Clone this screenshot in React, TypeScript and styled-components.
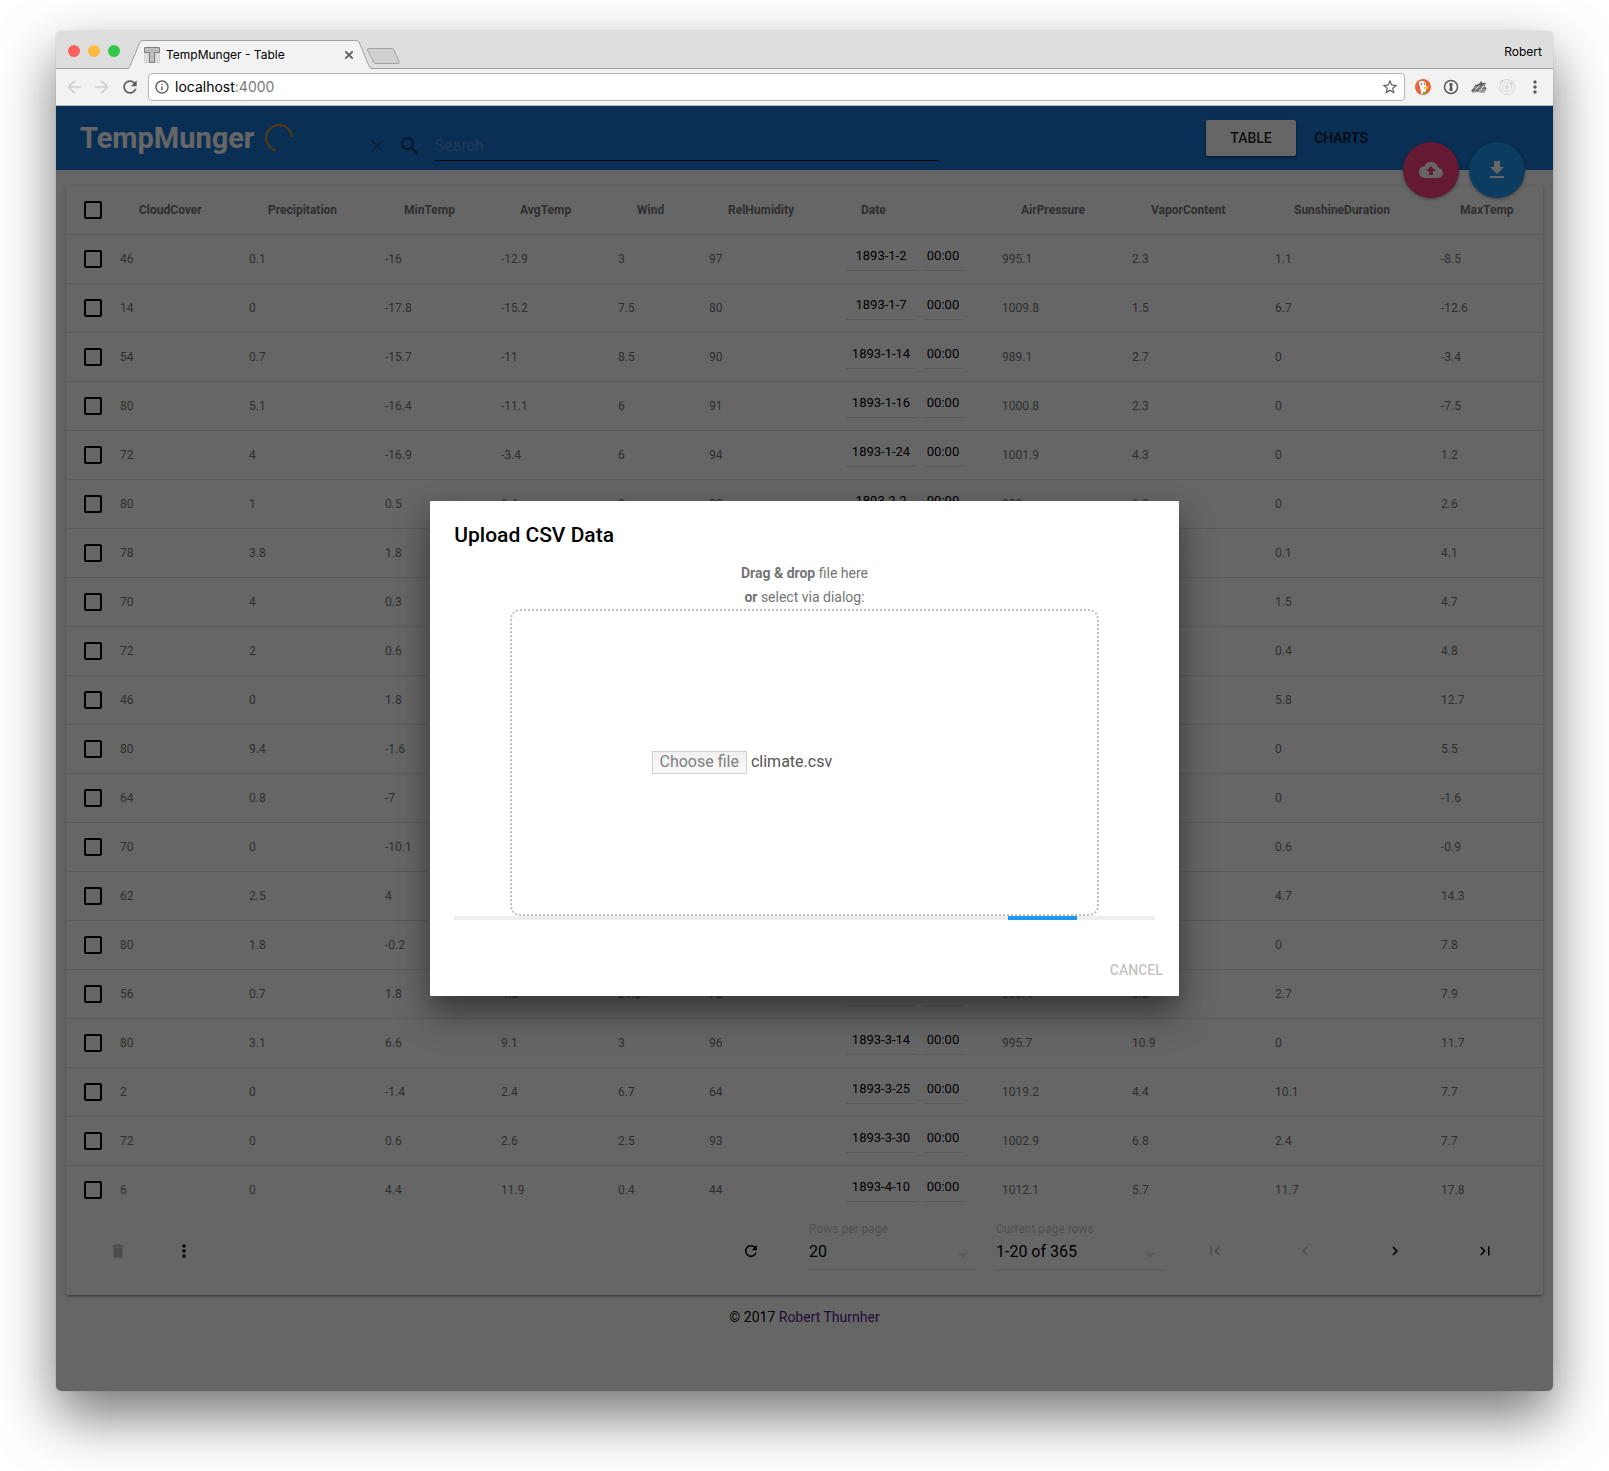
import React from "react";
import styled, { createGlobalStyle } from "styled-components";

const GlobalStyle = createGlobalStyle`
  *, *::before, *::after { box-sizing: border-box; }
  body {
    margin: 0;
    background: #fff;
    color: #000;
    font-family: Roboto, "Liberation Sans", sans-serif;
    font-size: 14px;
  }
  button, input, select { font-family: inherit; }
  button { padding: 0; border: 0; background: none; color: inherit; cursor: pointer; }
`;

/* ---------- browser window ---------- */

const Desktop = styled.div`
  display: flex;
  min-height: 100vh;
  padding: 31px 56px 80px;
`;

const BrowserWindow = styled.div`
  flex: 1;
  display: flex;
  flex-direction: column;
  min-width: 0;
  overflow: hidden;
  border-radius: 5px;
  box-shadow: 0 0 1px rgba(0, 0, 0, 0.4), 0 25px 56px rgba(0, 0, 0, 0.54);
`;

const TitleBar = styled.div`
  display: flex;
  height: 38px;
  padding: 0 11px 0 12px;
  border-bottom: 1px solid #a0a0a0;
  background: #dedede;
`;

const TrafficLights = styled.div`
  display: flex;
  gap: 8px;
  padding-top: 14px;
  width: 60px;
`;

const Light = styled.button<{ $color: string }>`
  width: 12px;
  height: 12px;
  border-radius: 50%;
  background: ${(p) => p.$color};
`;

const TabFrame = styled.div`
  display: grid;
  width: 244px;
  height: 38px;
  padding-top: 9px;

  > * { grid-area: 1 / 1; }
`;

const TabContent = styled.div`
  display: flex;
  align-items: center;
  padding: 0 16px;
  height: 29px;
`;

const TabTitle = styled.span`
  flex: 1;
  padding-left: 6px;
  font-family: Inter, Roboto, sans-serif;
  font-size: 12px;
  line-height: 16px;
`;

const IconButton = styled.button<{ $color?: string }>`
  display: flex;
  align-items: center;
  justify-content: center;
  color: ${(p) => p.$color ?? "inherit"};

  > svg { flex: none; }
`;

const NewTab = styled(IconButton)`
  align-self: flex-start;
  height: 18px;
  margin-top: 16px;
  margin-left: -6px;
`;

const Profile = styled.span`
  margin-left: auto;
  padding-top: 13px;
  font-family: Inter, Roboto, sans-serif;
  font-size: 12px;
  line-height: 16px;
`;

const AddressRow = styled.div`
  display: flex;
  align-items: center;
  gap: 8px;
  height: 37px;
  padding: 0 10px 0 8px;
  border-bottom: 1px solid #b6b6b6;
  background: #f2f2f2;
`;

const AddressBar = styled.div`
  flex: 1;
  display: flex;
  align-items: center;
  gap: 5px;
  height: 28px;
  padding: 0 5px;
  border: 1px solid #b4b4b4;
  border-radius: 4px;
  background: #fff;
  color: #5c5c5c;
  font-family: Inter, Roboto, sans-serif;
  font-size: 14px;
`;

const Url = styled.span`
  flex: 1;
  color: #000;
  line-height: 18px;
`;

const Port = styled.span`
  color: #7a7a7a;
`;

const Extensions = styled.div`
  display: flex;
  align-items: center;
  gap: 12px;
  padding-left: 2px;
`;

const ExtensionButton = styled(IconButton)`
  width: 16px;
`;

/* ---------- page ---------- */

const Page = styled.div`
  position: relative;
  flex: 1;
  display: flex;
  flex-direction: column;
  background: #fff;
`;

const AppBar = styled.header`
  display: flex;
  height: 64px;
  padding: 0 28px 0 24px;
  background: #1976d2;
`;

const Brand = styled.h1`
  display: flex;
  align-items: center;
  gap: 9px;
  margin: 0;
  color: #fff;
  font-size: 29px;
  font-weight: 700;
  line-height: 64px;
`;

const SearchBox = styled.div`
  display: flex;
  flex: 0 1 572px;
  align-items: center;
  gap: 11px;
  height: 55px;
  margin-left: 73px;
  padding-top: 24px;
`;

const SearchLabel = styled.label`
  display: flex;
  color: rgba(0, 0, 0, 0.54);
`;

const SearchInput = styled.input`
  flex: 1;
  min-width: 0;
  height: 31px;
  margin-left: 2px;
  padding: 0;
  border: 0;
  border-bottom: 1px solid rgba(0, 0, 0, 0.87);
  background: none;
  font-size: 16px;
  outline: 0;

  &::placeholder { color: rgba(255, 255, 255, 0.24); }
`;

const Nav = styled.nav`
  display: flex;
  align-items: center;
  margin-left: auto;
  margin-right: 17px;
  height: 64px;
`;

const NavButton = styled.button<{ $active?: boolean }>`
  width: 90px;
  height: 36px;
  border-radius: 2px;
  color: rgba(0, 0, 0, 0.87);
  font-size: 14px;
  font-weight: 500;
  text-transform: uppercase;
  ${(p) =>
    p.$active &&
    "background: #fff; box-shadow: 0 1px 3px rgba(0, 0, 0, 0.4), 0 1px 2px rgba(0, 0, 0, 0.24);"}
`;

const FloatingActions = styled.div`
  display: flex;
  gap: 10px;
  height: 56px;
  margin-top: 36px;
  z-index: 1;
`;

const Fab = styled(IconButton)<{ $bg: string }>`
  width: 56px;
  height: 56px;
  border-radius: 50%;
  background: ${(p) => p.$bg};
  color: #fff;
  box-shadow: 0 1px 4px rgba(0, 0, 0, 0.26), 0 1px 2px rgba(0, 0, 0, 0.2);
`;

const Card = styled.main`
  margin: 16px 10px 0;
  border-radius: 2px;
  background: #fff;
  box-shadow: 0 1px 5px rgba(0, 0, 0, 0.2), 0 2px 2px rgba(0, 0, 0, 0.14), 0 3px 1px -2px rgba(0, 0, 0, 0.12);
`;

const Table = styled.table`
  width: 100%;
  table-layout: fixed;
  border-spacing: 0;
  color: #757575;
  font-size: 12px;
  text-align: left;
`;

const Col = styled.col<{ $w: number }>`
  width: ${(p) => p.$w}px;
`;

const HeadCell = styled.th`
  height: 49px;
  padding: 0 0 0 19px;
  border-bottom: 1px solid rgba(0, 0, 0, 0.12);
  font-weight: 700;
`;

const Cell = styled.td`
  height: 49px;
  padding: 0;
  border-bottom: 1px solid rgba(0, 0, 0, 0.12);

  tbody > tr:last-child > & { border-bottom-color: transparent; }
`;

const CheckCell = styled(Cell)`
  padding-left: 18px;
`;

const Checkbox = styled.input`
  display: block;
  appearance: none;
  width: 18px;
  height: 18px;
  margin: 0;
  border: 2px solid #000;
  border-radius: 2px;
`;

const DateFields = styled.div`
  display: flex;
  gap: 7px;
  padding: 0 0 6px 4px;
`;

const DateInput = styled.input<{ $w: number }>`
  width: ${(p) => p.$w}px;
  height: 30px;
  padding: 0 0 1px;
  border: 0;
  border-bottom: 1px solid rgba(0, 0, 0, 0.12);
  background: none;
  color: #000;
  font-size: 13px;
  text-align: center;
`;

const TableFooter = styled.div`
  display: flex;
  align-items: center;
  height: 80px;
  padding: 0 13px 8px 19px;
`;

const ToolButton = styled(IconButton)<{ $w: number }>`
  width: ${(p) => p.$w}px;
  height: 36px;

  &:disabled { color: rgba(0, 0, 0, 0.26); cursor: default; }
`;

const Spacer = styled.div`
  flex: 1;
`;

const PagingFields = styled.div`
  display: flex;
  gap: 20px;
  padding: 0 7px 12px 25px;
`;

const Field = styled.div`
  display: grid;
  grid-template-columns: 1fr 25px;
  align-items: center;
  width: 167px;
`;

const FieldLabel = styled.label`
  grid-column: 1 / -1;
  color: rgba(0, 0, 0, 0.26);
  font-size: 12px;
  line-height: 16px;
`;

const FieldSelect = styled.select`
  grid-area: 2 / 1 / 3 / 3;
  height: 33px;
  padding: 0 0 3px;
  border: 0;
  border-bottom: 1px solid rgba(0, 0, 0, 0.12);
  border-radius: 0;
  appearance: none;
  background: none;
  color: #000;
  font-size: 16px;
`;

const FieldArrow = styled.span`
  grid-area: 2 / 2;
  display: flex;
  padding-top: 4px;
  color: rgba(0, 0, 0, 0.12);
  pointer-events: none;
`;

const Copyright = styled.footer`
  padding: 10px 0 62px;
  font-size: 14px;
  line-height: 24px;
  text-align: center;

  a { color: #551a8b; text-decoration: none; }
`;

/* ---------- upload dialog ---------- */

const Backdrop = styled.div`
  position: absolute;
  inset: 0;
  z-index: 2;
  display: flex;
  align-items: center;
  justify-content: center;
  background: rgba(0, 0, 0, 0.6);
`;

const Dialog = styled.section`
  width: 50%;
  border-radius: 1px;
  background: #fff;
  box-shadow: 0 19px 38px rgba(0, 0, 0, 0.3), 0 12px 24px rgba(0, 0, 0, 0.22);
`;

const DialogTitle = styled.h2`
  margin: 0;
  padding: 24px 24px 16px;
  font-size: 21px;
  font-weight: 500;
  line-height: 20px;
`;

const DialogBody = styled.div`
  padding: 0 24px 24px;
`;

const Hint = styled.p`
  margin: 0;
  color: #757575;
  font-size: 14px;
  line-height: 24px;
  text-align: center;
`;

const DropZone = styled.div`
  display: flex;
  align-items: center;
  justify-content: center;
  height: 307px;
  margin: 0 8%;
  border: 2px dotted #bdbdbd;
  border-radius: 10px;
`;

const FilePicker = styled.label`
  display: flex;
  align-items: center;
  gap: 4px;
  width: 306px;
  color: #555;
  font-size: 16px;
  line-height: 20px;
`;

const FileInput = styled.input`
  position: absolute;
  width: 1px;
  height: 1px;
  opacity: 0;
`;

const FileButton = styled.span`
  height: 23px;
  padding: 0 7px;
  border: 1px solid #d0d0d0;
  background: linear-gradient(#f0f0f0, #fafafa);
  color: #808080;
`;

const FileName = styled.span`
  padding-bottom: 2px;
`;

const Progress = styled.div`
  height: 4px;
  background: #eee;
`;

const ProgressBar = styled.div`
  width: 69px;
  height: 4px;
  margin-left: 79%;
  background: #2196f3;
`;

const DialogActions = styled.div`
  display: flex;
  justify-content: flex-end;
  padding: 8px;
`;

const FlatButton = styled.button`
  height: 36px;
  padding: 0 8px;
  color: rgba(0, 0, 0, 0.26);
  font-size: 14px;
  font-weight: 500;
  text-transform: uppercase;
`;

/* ---------- icons ---------- */

const PATHS = {
  back: "M20 11H7.83l5.59-5.59L12 4l-8 8 8 8 1.41-1.41L7.83 13H20v-2z",
  forward: "M12 4l-1.41 1.41L16.17 11H4v2h12.17l-5.58 5.59L12 20l8-8z",
  refresh:
    "M17.65 6.35C16.2 4.9 14.21 4 12 4c-4.42 0-7.99 3.58-7.99 8s3.57 8 7.99 8c3.73 0 6.84-2.55 7.73-6h-2.08c-.82 2.33-3.04 4-5.65 4-3.31 0-6-2.69-6-6s2.69-6 6-6c1.66 0 3.14.69 4.22 1.78L13 11h7V4l-2.35 2.35z",
  info: "M11 17h2v-6h-2v6zm1-15C6.48 2 2 6.48 2 12s4.48 10 10 10 10-4.48 10-10S17.52 2 12 2zm0 18c-4.41 0-8-3.59-8-8s3.59-8 8-8 8 3.59 8 8-3.59 8-8 8zM11 9h2V7h-2v2z",
  star: "M22 9.24l-7.19-.62L12 2 9.19 8.63 2 9.24l5.46 4.73L5.82 21 12 17.27 18.18 21l-1.63-7.03L22 9.24zM12 15.4l-3.76 2.27 1-4.28-3.32-2.88 4.38-.38L12 6.1l1.71 4.04 4.38.38-3.32 2.88 1 4.28L12 15.4z",
  more: "M12 8c1.1 0 2-.9 2-2s-.9-2-2-2-2 .9-2 2 .9 2 2 2zm0 2c-1.1 0-2 .9-2 2s.9 2 2 2 2-.9 2-2-.9-2-2-2zm0 6c-1.1 0-2 .9-2 2s.9 2 2 2 2-.9 2-2-.9-2-2-2z",
  close:
    "M19 6.41L17.59 5 12 10.59 6.41 5 5 6.41 10.59 12 5 17.59 6.41 19 12 13.41 17.59 19 19 17.59 13.41 12z",
  search:
    "M15.5 14h-.79l-.28-.27C15.41 12.59 16 11.11 16 9.5 16 5.91 13.09 3 9.5 3S3 5.91 3 9.5 5.91 16 9.5 16c1.61 0 3.09-.59 4.23-1.57l.27.28v.79l5 4.99L20.49 19l-4.99-5zm-6 0C7.01 14 5 11.99 5 9.5S7.01 5 9.5 5 14 7.01 14 9.5 11.99 14 9.5 14z",
  upload:
    "M19.35 10.04C18.67 6.59 15.64 4 12 4 9.11 4 6.6 5.64 5.35 8.04 2.34 8.36 0 10.91 0 14c0 3.31 2.69 6 6 6h13c2.76 0 5-2.24 5-5 0-2.64-2.05-4.78-4.65-4.96zM14 13v4h-4v-4H7l5-5 5 5h-3z",
  download: "M19 9h-4V3H9v6H5l7 7 7-7zM5 18v2h14v-2H5z",
  trash: "M6 19c0 1.1.9 2 2 2h8c1.1 0 2-.9 2-2V7H6v12zM19 4h-3.5l-1-1h-5l-1 1H5v2h14V4z",
  first: "M18.41 16.59L13.82 12l4.59-4.59L17 6l-6 6 6 6zM6 6h2v12H6z",
  prev: "M15.41 7.41L14 6l-6 6 6 6 1.41-1.41L10.83 12z",
  next: "M10 6L8.59 7.41 13.17 12l-4.58 4.59L10 18l6-6z",
  last: "M5.59 7.41L10.18 12l-4.59 4.59L7 18l6-6-6-6zM16 6h2v12h-2z",
  dropdown: "M7 10l5 5 5-5z",
};

function Icon({ name, size = 24 }: { name: keyof typeof PATHS; size?: number }) {
  return (
    <svg width={size} height={size} viewBox="0 0 24 24" fill="currentColor" aria-hidden="true">
      <path d={PATHS[name]} />
    </svg>
  );
}

function TabShape() {
  return (
    <svg width="244" height="29" viewBox="0 0 244 29" aria-hidden="true">
      <path d="M0 29 L1 28 L12 2 Q13 .5 15 .5 H228 Q230 .5 231 2 L242 28 L244 29Z" fill="#f2f2f2" />
      <path d="M0 28.5 Q1 28 2 26 L12 2 Q13 .5 15 .5 H228 Q230 .5 231 2 L241 26 Q242 28 244 28.5" fill="none" stroke="#a0a0a0" />
    </svg>
  );
}

function Favicon() {
  return (
    <svg width="16" height="16" viewBox="0 0 16 16" aria-hidden="true">
      <rect width="16" height="16" fill="#d9d9d9" />
      <path d="M.5.5h15v5h-5v10h-5v-10h-5z" fill="#bdbdbd" stroke="#7d7d7d" />
    </svg>
  );
}

function CloseTabIcon() {
  return (
    <svg width="14" height="14" viewBox="0 0 14 14" fill="none" stroke="currentColor" strokeWidth="1.8" aria-hidden="true">
      <path d="M3.300 3.300L10.700 10.700M10.700 3.300L3.300 10.700" />
    </svg>
  );
}

function NewTabShape() {
  return (
    <svg width="35" height="18" viewBox="0 0 35 18" aria-hidden="true">
      <path d="M3 1.5H26Q27.500 1.500 28 3L33 14.500Q33.500 16.500 32 16.500H10Q8 16.500 7.500 15L1.500 3Q1 1.500 3 1.500Z" fill="#d0d0d0" stroke="#a3a3a3" />
    </svg>
  );
}

function Spinner() {
  return (
    <svg width="30" height="30" viewBox="0 0 30 30" aria-hidden="true">
      <path d="M11.600 27.500A13 13 0 1 1 28 14" fill="none" stroke="#ff9800" strokeOpacity="0.85" strokeWidth="2" />
    </svg>
  );
}

function DuckIcon() {
  return (
    <svg width="16" height="16" viewBox="0 0 16 16" aria-hidden="true">
      <circle cx="8" cy="8" r="8" fill="#e8643c" />
      <path d="M4 3Q5 1.500 7.500 2Q11 2.500 11 6L11.500 9L10 14.500L6.500 15.500L5 8Q3.500 5 4 3Z" fill="#fff" />
      <circle cx="6.500" cy="5" r="0.800" fill="#345" />
      <circle cx="9.500" cy="5" r="0.700" fill="#345" />
      <path d="M8.500 7.500L14 7.500L12 9L13.500 10H9Z" fill="#fc3" />
      <path d="M7.500 13L12 12.500L11 15L8 15Z" fill="#6b4" />
    </svg>
  );
}

function KeyholeIcon() {
  return (
    <svg width="16" height="16" viewBox="0 0 16 16" aria-hidden="true">
      <circle cx="8" cy="8" r="6.500" fill="none" stroke="#5c5c5c" strokeWidth="1.500" />
      <path d="M6.500 4h3v3l-.6 1 .6 1v3h-3V9l.6-1-.6-1z" fill="#5c5c5c" />
    </svg>
  );
}

function BadgerIcon() {
  return (
    <svg width="16" height="16" viewBox="0 0 16 16" aria-hidden="true">
      <path d="M0 12L4 6L8 4.500L10 2L11.500 4L15 4L14 7L16 10L13 14L6 13L2 14Z" fill="#9a9a9a" />
      <path d="M1 12L7 8L14 4M4 7L8 6L11 3M5 12L10 9L15 9" stroke="#4a4a4a" fill="none" strokeWidth="1.200" />
      <path d="M4 10.500L9 6.500M8 11.500L13 7.500" stroke="#e6e6e6" fill="none" />
    </svg>
  );
}

function OrbitIcon() {
  return (
    <svg width="16" height="16" viewBox="0 0 16 16" fill="none" stroke="#d6d6d6" aria-hidden="true">
      <circle cx="8" cy="8" r="7.500" />
      <circle cx="8" cy="8" r="4.500" />
      <circle cx="8" cy="8" r="1.500" fill="#d6d6d6" />
      <circle cx="3" cy="2" r="1" fill="#d6d6d6" />
      <circle cx="12.500" cy="4" r="1" fill="#d6d6d6" />
    </svg>
  );
}

/* ---------- data ---------- */

const COLUMNS: [string, number][] = [
  ["CloudCover", 129],
  ["Precipitation", 136],
  ["MinTemp", 116],
  ["AvgTemp", 117],
  ["Wind", 91],
  ["RelHumidity", 133],
  ["Date", 160],
  ["AirPressure", 130],
  ["VaporContent", 143],
  ["SunshineDuration", 166],
  ["MaxTemp", 102],
];

const DATE_COLUMN = 6;

/* One line per reading, comma separated; an empty field is a missing value. */
const ROWS = `46,0.1,-16,-12.9,3,97,1893-1-2,995.1,2.3,1.1,-8.5
14,0,-17.8,-15.2,7.5,80,1893-1-7,1009.8,1.5,6.7,-12.6
54,0.7,-15.7,-11,8.5,90,1893-1-14,989.1,2.7,0,-3.4
80,5.1,-16.4,-11.1,6,91,1893-1-16,1000.8,2.3,0,-7.5
72,4,-16.9,-3.4,6,94,1893-1-24,1001.9,4.3,0,1.2
80,1,0.5,1.4,8,88,1893-2-2,989,6.0,0,2.6
78,3.8,1.8,,,,,,,0.1,4.1
70,4,0.3,,,,,,,1.5,4.7
72,2,0.6,,,,,,,0.4,4.8
46,0,1.8,,,,,,,5.8,12.7
80,9.4,-1.6,,,,,,,0,5.5
64,0.8,-7,,,,,,,0,-1.6
70,0,-10.1,,,,,,,0.6,-0.9
62,2.5,4,,,,,,,4.7,14.3
80,1.8,-0.2,,,,,,,0,7.8
56,0.7,1.8,4.8,21.3,72,,993.4,6.8,2.7,7.9
80,3.1,6.6,9.1,3,96,1893-3-14,995.7,10.9,0,11.7
2,0,-1.4,2.4,6.7,64,1893-3-25,1019.2,4.4,10.1,7.7
72,0,0.6,2.6,2.5,93,1893-3-30,1002.9,6.8,2.4,7.7
6,0,4.4,11.9,0.4,44,1893-4-10,1012.1,5.7,11.7,17.8`
  .split("\n")
  .map((line) => line.split(","));

function BrowserChrome() {
  return (
    <>
      <TitleBar>
        <TrafficLights>
          <Light $color="#fc605c" aria-label="Close window" />
          <Light $color="#fdbc40" aria-label="Minimize window" />
          <Light $color="#34c749" aria-label="Zoom window" />
        </TrafficLights>
        <TabFrame>
          <TabShape />
          <TabContent>
            <Favicon />
            <TabTitle>TempMunger - Table</TabTitle>
            <IconButton $color="#5a5a5a" aria-label="Close tab">
              <CloseTabIcon />
            </IconButton>
          </TabContent>
        </TabFrame>
        <NewTab aria-label="New tab">
          <NewTabShape />
        </NewTab>
        <Profile>Robert</Profile>
      </TitleBar>
      <AddressRow>
        <IconButton $color="#d0d0d0" aria-label="Back"><Icon name="back" size={20} /></IconButton>
        <IconButton $color="#d0d0d0" aria-label="Forward"><Icon name="forward" size={20} /></IconButton>
        <IconButton $color="#5c5c5c" aria-label="Reload"><Icon name="refresh" size={20} /></IconButton>
        <AddressBar>
          <Icon name="info" size={16} />
          <Url>localhost<Port>:4000</Port></Url>
          <IconButton aria-label="Bookmark"><Icon name="star" size={18} /></IconButton>
        </AddressBar>
        <Extensions>
          <ExtensionButton aria-label="Duck search"><DuckIcon /></ExtensionButton>
          <ExtensionButton aria-label="Passwords"><KeyholeIcon /></ExtensionButton>
          <ExtensionButton aria-label="Tracker blocker"><BadgerIcon /></ExtensionButton>
          <ExtensionButton aria-label="Developer tools"><OrbitIcon /></ExtensionButton>
          <ExtensionButton $color="#5c5c5c" aria-label="Menu"><Icon name="more" size={20} /></ExtensionButton>
        </Extensions>
      </AddressRow>
    </>
  );
}

function ClimateTable() {
  return (
    <Table>
      <colgroup>
        <Col $w={54} />
        {COLUMNS.map(([name, width]) => <Col key={name} $w={width} />)}
      </colgroup>
      <thead>
        <tr>
          <CheckCell><Checkbox type="checkbox" aria-label="Select all rows" /></CheckCell>
          {COLUMNS.map(([name]) => <HeadCell key={name} scope="col">{name}</HeadCell>)}
        </tr>
      </thead>
      <tbody>
        {ROWS.map((row, r) => (
          <tr key={r}>
            <CheckCell><Checkbox type="checkbox" aria-label={`Select row ${r + 1}`} /></CheckCell>
            {row.map((value, c) =>
              c === DATE_COLUMN ? (
                <Cell key={c}>
                  <DateFields>
                    <DateInput $w={70} defaultValue={value} aria-label="Date" />
                    <DateInput $w={40} defaultValue={value && "00:00"} aria-label="Time" />
                  </DateFields>
                </Cell>
              ) : (
                <Cell key={c}>{value}</Cell>
              )
            )}
          </tr>
        ))}
      </tbody>
    </Table>
  );
}

function Select({ id, label, value }: { id: string; label: string; value: string }) {
  return (
    <Field>
      <FieldLabel htmlFor={id}>{label}</FieldLabel>
      <FieldSelect id={id} defaultValue={value}>
        <option>{value}</option>
      </FieldSelect>
      <FieldArrow><Icon name="dropdown" size={24} /></FieldArrow>
    </Field>
  );
}

function UploadDialog() {
  return (
    <Backdrop>
      <Dialog role="dialog" aria-labelledby="upload-title">
        <DialogTitle id="upload-title">Upload CSV Data</DialogTitle>
        <DialogBody>
          <Hint><b>Drag &amp; drop</b> file here</Hint>
          <Hint><b>or</b> select via dialog:</Hint>
          <DropZone>
            <FilePicker>
              <FileInput type="file" accept=".csv" />
              <FileButton>Choose file</FileButton>
              <FileName>climate.csv</FileName>
            </FilePicker>
          </DropZone>
          <Progress role="progressbar" aria-label="Upload progress">
            <ProgressBar />
          </Progress>
        </DialogBody>
        <DialogActions>
          <FlatButton>Cancel</FlatButton>
        </DialogActions>
      </Dialog>
    </Backdrop>
  );
}

export default function App() {
  return (
    <>
      <GlobalStyle />
      <Desktop>
        <BrowserWindow>
          <BrowserChrome />
          <Page>
            <AppBar>
              <Brand>
                TempMunger
                <Spinner />
              </Brand>
              <SearchBox>
                <IconButton $color="rgba(0, 0, 0, 0.26)" aria-label="Clear search">
                  <Icon name="close" size={20} />
                </IconButton>
                <SearchLabel htmlFor="search" aria-label="Search"><Icon name="search" /></SearchLabel>
                <SearchInput id="search" placeholder="Search" />
              </SearchBox>
              <Nav>
                <NavButton $active>Table</NavButton>
                <NavButton>Charts</NavButton>
              </Nav>
              <FloatingActions>
                <Fab $bg="#ff4081" aria-label="Upload"><Icon name="upload" /></Fab>
                <Fab $bg="#2196f3" aria-label="Download"><Icon name="download" /></Fab>
              </FloatingActions>
            </AppBar>
            <Card>
              <ClimateTable />
              <TableFooter>
                <ToolButton $w={66} disabled aria-label="Delete"><Icon name="trash" size={18} /></ToolButton>
                <ToolButton $w={66} aria-label="More"><Icon name="more" size={20} /></ToolButton>
                <Spacer />
                <ToolButton $w={66} aria-label="Refresh"><Icon name="refresh" size={18} /></ToolButton>
                <PagingFields>
                  <Select id="rows-per-page" label="Rows per page" value="20" />
                  <Select id="page-rows" label="Current page rows" value="1-20 of 365" />
                </PagingFields>
                <ToolButton $w={90} disabled aria-label="First page"><Icon name="first" size={18} /></ToolButton>
                <ToolButton $w={90} disabled aria-label="Previous page"><Icon name="prev" size={18} /></ToolButton>
                <ToolButton $w={90} aria-label="Next page"><Icon name="next" size={18} /></ToolButton>
                <ToolButton $w={90} aria-label="Last page"><Icon name="last" size={18} /></ToolButton>
              </TableFooter>
            </Card>
            <Copyright>
              © 2017 <a href="#author">Robert Thurnher</a>
            </Copyright>
            <UploadDialog />
          </Page>
        </BrowserWindow>
      </Desktop>
    </>
  );
}
